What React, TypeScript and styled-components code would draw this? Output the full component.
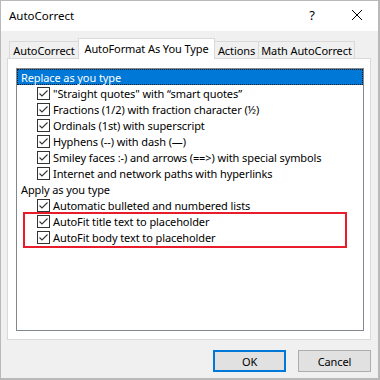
import React from "react";
import styled, { createGlobalStyle } from "styled-components";

const Global = createGlobalStyle`
  html, body { margin: 0; padding: 0; background: #fff; }
  body { font-family: "Noto Sans", "Liberation Sans", sans-serif; font-size: 11px; letter-spacing: -0.1px; color: #000; }
  * { box-sizing: border-box; }
`;

const Window = styled.div`
  width: 380px;
  height: 380px;
  display: flex;
  flex-direction: column;
  border-style: solid;
  border-color: #b9b9b9;
  border-width: 1px 2px 2px 1px;
  background: #f0f0f0;
`;

const TitleBar = styled.div`
  height: 30px;
  background: #fff;
  display: flex;
  align-items: center;
  padding-left: 8px;
`;

const Title = styled.div`
  font-size: 11.5px;
  letter-spacing: 0;
  flex: 1;
  margin-top: -1px;
`;

const Help = styled.div`
  width: 20px;
  font-size: 13px;
  margin-right: 30px;
  margin-top: -2px;
  text-align: center;
`;

const Close = styled.div`
  width: 10px;
  height: 10px;
  margin-right: 16px;
  margin-top: -3px;
  display: flex;
`;

const Body = styled.div`
  flex: 1;
  display: flex;
  flex-direction: column;
  padding: 7px 7px 0 6px;
`;

const TabRow = styled.div`
  display: flex;
  align-items: flex-end;
  height: 21px;
  padding-left: 2px;
  position: relative;
  z-index: 1;
`;

const Tab = styled.div<{ $active?: boolean; $w: number }>`
  width: ${(p) => p.$w}px;
  flex: none;
  height: ${(p) => (p.$active ? 21 : 18)}px;
  border: 1px solid #d9d9d9;
  border-bottom: ${(p) => (p.$active ? "none" : "1px solid #d9d9d9")};
  margin-left: -1px;
  background: ${(p) => (p.$active ? "#fff" : "#f0f0f0")};
  display: flex;
  align-items: center;
  justify-content: center;
  padding-bottom: ${(p) => (p.$active ? 2 : 0)}px;
  white-space: nowrap;
  &:first-child { margin-left: 0; }
`;

const Panel = styled.div`
  height: 282px;
  margin-top: -1px;
  background: #fff;
  border: 1px solid #d9d9d9;
  padding: 9px 6px 8px 8px;
  display: flex;
`;

const ListBox = styled.div`
  flex: 1;
  border: 1px solid #828790;
`;

const HeaderRow = styled.div<{ $selected?: boolean }>`
  height: 16px;
  display: flex;
  align-items: center;
  padding-left: 3px;
  color: ${(p) => (p.$selected ? "#fff" : "#000")};
  background: ${(p) => (p.$selected ? "#0078d7" : "transparent")};
  border: 1px ${(p) => (p.$selected ? "dotted #1a1a1a" : "solid transparent")};
  white-space: nowrap;
`;

const CheckRow = styled.div`
  height: 16px;
  display: flex;
  align-items: center;
  padding-left: 20px;
  gap: 3px;
  white-space: nowrap;
`;

const Highlight = styled.div`
  position: relative;
  &::after {
    content: "";
    position: absolute;
    left: 6px;
    top: -1px;
    width: 320px;
    height: 32px;
    border: 2px solid #e81c2a;
    pointer-events: none;
  }
`;

const Box = styled.svg`
  width: 13px;
  height: 13px;
  flex: none;
`;

const Footer = styled.div`
  display: flex;
  justify-content: flex-end;
  gap: 12px;
  padding: 10px 0 0 0;
`;

const Button = styled.div<{ $default?: boolean }>`
  width: 73px;
  height: 22px;
  background: #e1e1e1;
  border: ${(p) => (p.$default ? "2px solid #0078d7" : "1px solid #adadad")};
  display: flex;
  align-items: center;
  justify-content: center;
`;

const Check = () => (
  <Box viewBox="0 0 13 13">
    <rect x="0.5" y="0.5" width="12" height="12" fill="#fff" stroke="#333" />
    <path d="M2.5 6.5 L5 9 L10.5 3.5" fill="none" stroke="#333" strokeWidth="1.1" />
  </Box>
);

const CheckItem = ({ label }: { label: string }) => (
  <CheckRow>
    <Check />
    <span>{label}</span>
  </CheckRow>
);

export default function App() {
  return (
    <>
      <Global />
      <Window>
        <TitleBar>
          <Title>AutoCorrect</Title>
          <Help>?</Help>
          <Close>
            <svg width="10" height="10" viewBox="0 0 10 10">
              <path d="M0 0 L10 10 M10 0 L0 10" stroke="#000" strokeWidth="1" />
            </svg>
          </Close>
        </TitleBar>
        <Body>
          <TabRow>
            <Tab $w={70}>AutoCorrect</Tab>
            <Tab $w={137} $active>AutoFormat As You Type</Tab>
            <Tab $w={45}>Actions</Tab>
            <Tab $w={97}>Math AutoCorrect</Tab>
          </TabRow>
          <Panel>
            <ListBox>
              <HeaderRow $selected>Replace as you type</HeaderRow>
              <CheckItem label={"\"Straight quotes\" with \u201Csmart quotes\u201D"} />
              <CheckItem label={"Fractions (1/2) with fraction character (\u00BD)"} />
              <CheckItem label="Ordinals (1st) with superscript" />
              <CheckItem label={"Hyphens (--) with dash (\u2014)"} />
              <CheckItem label="Smiley faces :-) and arrows (==>) with special symbols" />
              <CheckItem label="Internet and network paths with hyperlinks" />
              <HeaderRow>Apply as you type</HeaderRow>
              <CheckItem label="Automatic bulleted and numbered lists" />
              <Highlight>
                <CheckItem label="AutoFit title text to placeholder" />
                <CheckItem label="AutoFit body text to placeholder" />
              </Highlight>
            </ListBox>
          </Panel>
          <Footer>
            <Button $default>OK</Button>
            <Button>Cancel</Button>
          </Footer>
        </Body>
      </Window>
    </>
  );
}
